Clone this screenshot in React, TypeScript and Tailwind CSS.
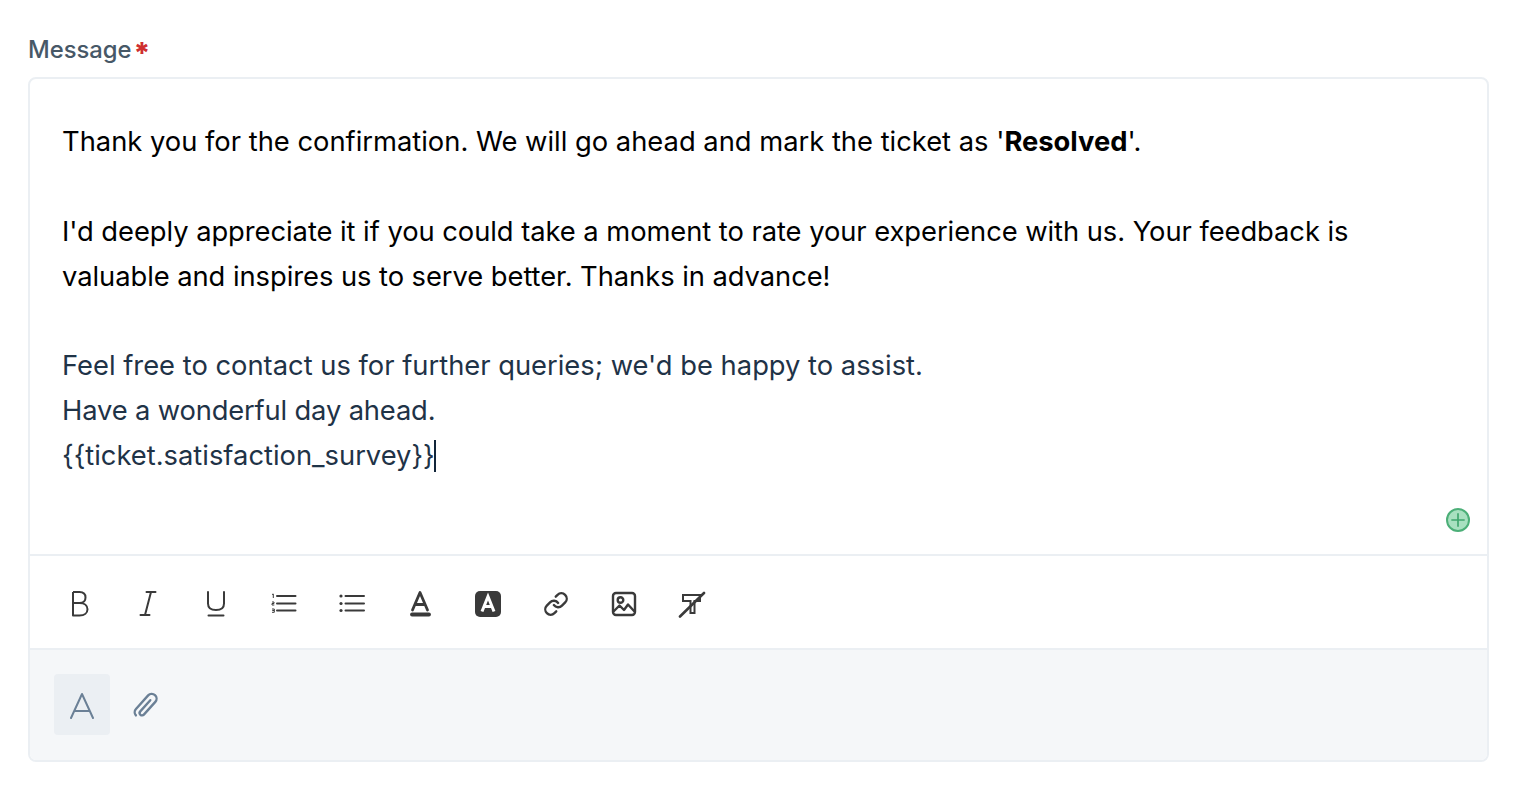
const toolbarIcon = "w-[28px] h-[28px] text-[#3a3a3a]";

function BoldIcon() {
  return (
    <svg viewBox="0 0 28 28" fill="none" stroke="currentColor" strokeWidth="2" className={toolbarIcon}>
      <path d="M7 2H13.500C17.500 2 19.500 4.500 19.500 7.500C19.500 10.800 17.500 13 13.500 13H7M13.500 13C18.500 13 21.500 15.500 21.500 19.300C21.500 23 18.500 25.500 13.500 25.500H7V2" strokeLinejoin="round" />
    </svg>
  );
}

function ItalicIcon() {
  return (
    <svg viewBox="0 0 28 28" fill="none" stroke="currentColor" strokeWidth="2" strokeLinecap="round" className={toolbarIcon}>
      <path d="M12.500 2H21.500M6.500 25H15.500M17 2L11 25" />
    </svg>
  );
}

function UnderlineIcon() {
  return (
    <svg viewBox="0 0 28 28" fill="none" stroke="currentColor" strokeWidth="2" strokeLinecap="round" className={toolbarIcon}>
      <path d="M6 2V13.500C6 18 9 20 14 20C19 20 22 18 22 13.500V2M6.500 25.500H21.500" />
    </svg>
  );
}

function OrderedListIcon() {
  return (
    <svg viewBox="0 0 28 28" fill="none" stroke="currentColor" className={toolbarIcon}>
      <path d="M7 6H25.500M7 13.500H25.500M7 20.500H25.500" strokeWidth="2" strokeLinecap="round" />
      <path d="M2 4.500L3.300 4V8M2 12H4V13.500H2V15H4.300M2 19H4.300V20.500H2.500M2.500 20.500H4.300V22.300H2" strokeWidth="1" />
    </svg>
  );
}

function BulletListIcon() {
  return (
    <svg viewBox="0 0 28 28" fill="none" stroke="currentColor" className={toolbarIcon}>
      <path d="M7.500 6H26M7.500 13.500H26M7.500 20.500H26" strokeWidth="2" strokeLinecap="round" />
      <circle cx="3" cy="6" r="1.600" fill="currentColor" stroke="none" />
      <circle cx="3" cy="13.500" r="1.600" fill="currentColor" stroke="none" />
      <circle cx="3" cy="20.500" r="1.600" fill="currentColor" stroke="none" />
    </svg>
  );
}

function TextColorIcon() {
  return (
    <svg viewBox="0 0 28 28" fill="none" stroke="currentColor" strokeLinecap="round" className={toolbarIcon}>
      <path d="M6.500 20L14 2.500L21.500 20M9 14.500H19" strokeWidth="2.800" strokeLinejoin="round" />
      <path d="M6 24.500H23" strokeWidth="3.800" />
    </svg>
  );
}

function BackgroundColorIcon() {
  return (
    <svg viewBox="0 0 28 28" className={toolbarIcon}>
      <rect x="1" y="1" width="26" height="26" rx="5" fill="currentColor" />
      <path d="M8 21.500L14 6.500L20 21.500M10 16.500H18" fill="none" stroke="#fff" strokeWidth="3" />
    </svg>
  );
}

function LinkIcon() {
  return (
    <svg viewBox="-1 -1 26 26" fill="none" stroke="currentColor" strokeWidth="2.200" strokeLinecap="round" strokeLinejoin="round" className={toolbarIcon}>
      <path d="M10 13a5 5 0 0 0 7.540.540l3-3a5 5 0 0 0-7.070-7.070l-1.720 1.710" />
      <path d="M14 11a5 5 0 0 0-7.540-.540l-3 3a5 5 0 0 0 7.070 7.070l1.710-1.710" />
    </svg>
  );
}

function ImageIcon() {
  return (
    <svg viewBox="0 0 28 28" fill="none" stroke="currentColor" strokeWidth="2.400" className={toolbarIcon}>
      <rect x="3" y="3" width="22" height="22" rx="3" />
      <circle cx="10.500" cy="10" r="2.800" />
      <path d="M3.500 21.500L9.500 15.500L14 20L18 14.500L24.500 21.500" strokeLinejoin="round" />
    </svg>
  );
}

function ClearFormatIcon() {
  return (
    <svg viewBox="0 0 28 28" fill="none" stroke="currentColor" className={toolbarIcon}>
      <path d="M5 5H22V11H16.500V23H12.500V11H5Z" strokeWidth="2" />
      <path d="M2 26.500L26 3" strokeWidth="2.600" strokeLinecap="round" />
    </svg>
  );
}

export default function App() {
  const icons = [
    BoldIcon,
    ItalicIcon,
    UnderlineIcon,
    OrderedListIcon,
    BulletListIcon,
    TextColorIcon,
    BackgroundColorIcon,
    LinkIcon,
    ImageIcon,
    ClearFormatIcon,
  ];

  return (
    <div className="w-[1514px] h-[790px] bg-white px-[28px] pt-[34px] font-['Inter',sans-serif] overflow-hidden">
      <div className="flex items-center h-[32px] mb-[11px] text-[23.8px] font-medium text-[#475867]">
        Message
        <span className="ml-[2px] mt-[6px] text-[29px] text-[#cf2f2f] font-extrabold">*</span>
      </div>

      <div className="w-[1461px] h-[685px] border-2 border-[#ebeff3] rounded-[8px] overflow-hidden flex flex-col">
        <div className="relative h-[475px] px-[32px] pt-[40px] text-[27.33px] leading-[45px] text-black">
          <p>
            Thank you for the confirmation. We will go ahead and mark the ticket as '<strong className="font-bold">Resolved</strong>'.
          </p>
          <p className="mt-[45px] tracking-[-0.05px]">
            I'd deeply appreciate it if you could take a moment to rate your experience with us. Your feedback is
            <br />
            valuable and inspires us to serve better. Thanks in advance!
          </p>
          <div className="mt-[44px] text-[#1f3347]">
            <p>Feel free to contact us for further queries; we'd be happy to assist.</p>
            <p className="tracking-[-0.15px]">Have a wonderful day ahead.</p>
            <p className="flex items-center">
              {"{{ticket.satisfaction_survey}}"}
              <span className="w-[2px] h-[32px] bg-[#12263a] -ml-[1px]" />
            </p>
          </div>
          <div className="absolute right-[17px] bottom-[22px] w-[24px] h-[24px] rounded-full bg-[#a8e0c0] border-2 border-[#4caf78] flex items-center justify-center">
            <svg viewBox="0 0 24 24" className="w-[20px] h-[20px]" fill="none" stroke="#3fa56d" strokeWidth="2">
              <path d="M12 4V20M4 12H20" />
            </svg>
          </div>
        </div>

        <div className="h-[94px] border-t-2 border-[#ebeff3] flex items-center gap-[40px] pl-[36px] pt-[4px]">
          {icons.map((Icon, i) => (
            <Icon key={i} />
          ))}
        </div>

        <div className="flex-1 bg-[#f5f7f9] border-t-2 border-[#ebeff3] flex items-start gap-[22px] pl-[24px] pt-[24px]">
          <div className="w-[56px] h-[61px] bg-[#ebeff3] rounded-[4px] flex items-center justify-center">
            <svg viewBox="0 0 28 28" className="w-[28px] h-[28px]" fill="none" stroke="#6b8096" strokeWidth="2" strokeLinecap="round" strokeLinejoin="round">
              <path d="M3 27L14 3L25 27M6.500 20H21.500" />
            </svg>
          </div>
          <div className="h-[61px] flex items-center">
            <svg viewBox="-13 -14 26 28" className="w-[28px] h-[30px]" fill="none" stroke="#6b8096" strokeWidth="2.200" strokeLinecap="round" strokeLinejoin="round">
              <g transform="rotate(42)">
                <path d="M0 -6V8a2.250 2.250 0 0 0 4.500 0V-8a4.500 4.500 0 0 0 -9 0V9a4.500 4.500 0 0 0 4 4.500" />
              </g>
            </svg>
          </div>
        </div>
      </div>
    </div>
  );
}
